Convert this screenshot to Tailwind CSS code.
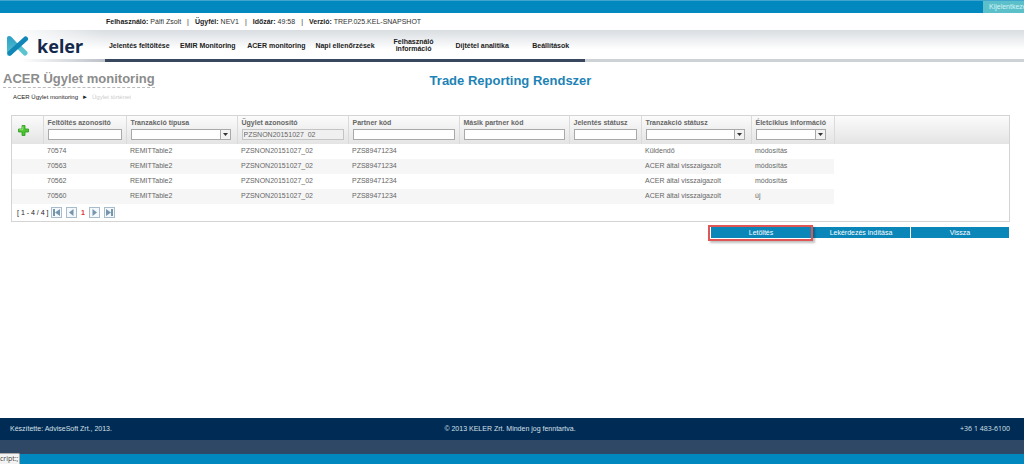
<!DOCTYPE html>
<html lang="hu">
<head>
<meta charset="utf-8">
<meta name="viewport" content="width=device-width, initial-scale=1">
<title>Trade Reporting Rendszer</title>
<script src="https://cdn.jsdelivr.net/npm/@tailwindcss/browser@4"></script>
</head>
<body class="flex min-h-screen flex-col overflow-x-hidden bg-white font-['Liberation_Sans',Arial,sans-serif] text-[7px] leading-[8px] text-[#666]">
<header>
  <div class="flex h-[13px] justify-end border-t border-[#40a6cf] bg-[#0088bf]">
    <a href="#" class="w-[41px] overflow-hidden bg-[#5cc0cb] pl-[6px] leading-[12px] whitespace-nowrap text-[#d5f4f5]">Kijelentkezés</a>
  </div>
  <div class="flex h-[17px] items-center gap-[6px] pl-[106px] text-[#333]">
    <span><b class="text-[#222]">Felhasználó:</b> Pálfi Zsolt</span><span>|</span>
    <span><b class="text-[#222]">Ügyfél:</b> NEV1</span><span>|</span>
    <span><b class="text-[#222]">Időzár:</b> 49:58</span><span>|</span>
    <span><b class="text-[#222]">Verzió:</b> TREP.025.KEL-SNAPSHOT</span>
  </div>
  <div class="flex h-[32px] bg-linear-to-b from-[#d9dde1] to-white to-60%">
    <a href="#" class="flex w-[105px] items-center gap-[8px] bg-linear-to-r from-white from-10% to-transparent pl-[7px]" aria-label="keler">
      <svg class="h-[20px] w-[22px]" viewBox="0 0 22 20" aria-hidden="true">
        <defs><linearGradient id="stem" x1="0" y1="0" x2="0" y2="1"><stop offset="0" stop-color="#2b9fc6"/><stop offset="1" stop-color="#5bc3cf"/></linearGradient></defs>
        <path d="M0 2Q0 0 2 0Q3.500 0 4.500 1L11 8L5 18.500Q4 20 2 20Q0 20 0 18Z" fill="url(#stem)"/>
        <path d="M11.500 10.500L18 17" stroke="#5cc3cf" stroke-width="5" stroke-linecap="round"/>
        <path d="M18.500 3L8 12.500L3 17" stroke="#1187b8" stroke-width="5" stroke-linecap="round" fill="none"/>
      </svg>
      <span class="font-['Noto_Sans',sans-serif] text-[18px] leading-[20px] font-bold text-[#14294d]">keler</span>
    </a>
    <nav class="grid w-[480px] grid-cols-7 items-center pb-[2px] text-center leading-[7px] font-bold text-[#222]">
      <a href="#">Jelentés feltöltése</a><a href="#">EMIR Monitoring</a><a href="#">ACER monitoring</a><a href="#">Napi ellenőrzések</a><a href="#">Felhasználó<br>információ</a><a href="#">Díjtétel analitika</a><a href="#">Beállítások</a>
    </nav>
  </div>
  <div class="-mt-[3px] flex h-[3px]">
    <div class="w-[105px] bg-linear-to-r from-white from-20% to-[#bcc1c8]"></div>
    <div class="w-[480px] bg-[#38475e]"></div>
    <div class="flex-1 bg-[#cdd2d7]"></div>
  </div>
</header>

<main class="flex-1">
  <div class="grid grid-cols-[1fr_auto_1fr] items-start pt-[9px] pr-[3px]">
    <h1 class="ml-[3px] w-fit border-b border-dashed border-[#bbb] text-[13px] leading-[16px] font-bold text-[#8c8c8c]">ACER Ügylet monitoring</h1>
    <h2 class="pt-[2px] text-[13px] leading-[16px] font-bold text-[#1d83b5]">Trade Reporting Rendszer</h2>
  </div>
  <nav class="mt-[4px] flex gap-[4px] pl-[13px] text-[6px]" aria-label="Morzsamenü">
    <a href="#" class="text-[#222]">ACER Ügylet monitoring</a><span class="text-[#222]">►</span><span class="text-[#ccc]">Ügylet történet</span>
  </nav>

  <section class="mr-[14px] ml-[11px] mt-[14px] border border-[#d4d4d4]">
    <table class="w-full table-fixed border-collapse text-left">
      <colgroup><col class="w-[31px]"><col class="w-[83px]"><col class="w-[111px]"><col class="w-[111px]"><col class="w-[111px]"><col class="w-[110px]"><col class="w-[72px]"><col class="w-[110px]"><col class="w-[83px]"><col></colgroup>
      <thead>
        <tr class="h-[28px] bg-linear-to-b from-[#fbfbfb] to-[#e4e4e4] align-top [&>th]:border-r [&>th]:border-[#dadada] [&>th]:px-[4px] [&>th]:pt-[3px] [&>th:last-child]:border-0">
          <th><button type="button" class="block pt-[6px] pl-[2px]" aria-label="Új"><svg class="h-[11px] w-[11px]" viewBox="0 0 11 11" aria-hidden="true"><path d="M4 .5H7V4H10.500V7H7V10.500H4V7H.5V4H4Z" fill="#4cc42f" stroke="#2c9a20" stroke-width=".8"/><path d="M4.800 1.500V4.800H1.500" stroke="#9be77c" fill="none"/></svg></button></th>
          <th><label for="f1" class="block">Feltöltés azonosító</label><input id="f1" class="mt-[2px] block h-[11px] w-full border border-[#a9a9a9] bg-white px-[2px] font-normal"></th>
          <th><label for="f2" class="block">Tranzakció típusa</label>
            <div class="relative mt-[2px] mr-[2px]"><select id="f2" class="block h-[11px] w-full appearance-none border border-[#a9a9a9] bg-white"><option></option></select><span class="pointer-events-none absolute inset-y-0 right-0 flex w-[11px] items-center justify-center border border-[#a9a9a9] bg-[#f2f2f2]"><svg class="h-[3px] w-[5px]" viewBox="0 0 5 3"><path d="M0 0H5L2.500 3Z" fill="#333"/></svg></span></div></th>
          <th><label for="f3" class="block">Ügylet azonosító</label><input id="f3" readonly value="PZSNON20151027_02" class="mt-[2px] block h-[11px] w-full border border-[#c4c4c4] bg-[#f0f0f0] px-[1px] leading-[9px] font-normal"></th>
          <th><label for="f4" class="block">Partner kód</label><input id="f4" class="mt-[2px] block h-[11px] w-full border border-[#a9a9a9] bg-white px-[2px] font-normal"></th>
          <th><label for="f5" class="block">Másik partner kód</label><input id="f5" class="mt-[2px] block h-[11px] w-full border border-[#a9a9a9] bg-white px-[2px] font-normal"></th>
          <th><label for="f6" class="block">Jelentés státusz</label><input id="f6" class="mt-[2px] block h-[11px] w-full border border-[#a9a9a9] bg-white px-[2px] font-normal"></th>
          <th><label for="f7" class="block">Tranzakció státusz</label>
            <div class="relative mt-[2px] mr-[2px]"><select id="f7" class="block h-[11px] w-full appearance-none border border-[#a9a9a9] bg-white"><option></option></select><span class="pointer-events-none absolute inset-y-0 right-0 flex w-[11px] items-center justify-center border border-[#a9a9a9] bg-[#f2f2f2]"><svg class="h-[3px] w-[5px]" viewBox="0 0 5 3"><path d="M0 0H5L2.500 3Z" fill="#333"/></svg></span></div></th>
          <th><label for="f8" class="block whitespace-nowrap">Életciklus információ</label>
            <div class="relative mt-[2px] mr-[4px]"><select id="f8" class="block h-[11px] w-full appearance-none border border-[#a9a9a9] bg-white"><option></option></select><span class="pointer-events-none absolute inset-y-0 right-0 flex w-[11px] items-center justify-center border border-[#a9a9a9] bg-[#f2f2f2]"><svg class="h-[3px] w-[5px]" viewBox="0 0 5 3"><path d="M0 0H5L2.500 3Z" fill="#333"/></svg></span></div></th>
          <th></th>
        </tr>
      </thead>
      <tbody class="[&>tr]:h-[15px] [&_td]:px-[4px] [&_td]:pb-[2px] [&>tr:nth-child(even)>td:not(:last-child)]:bg-[#f6f6f6]">
        <tr><td></td><td>70574</td><td>REMITTable2</td><td>PZSNON20151027_02</td><td>PZS89471234</td><td></td><td></td><td>Küldendő</td><td>módosítás</td><td></td></tr>
        <tr><td></td><td>70563</td><td>REMITTable2</td><td>PZSNON20151027_02</td><td>PZS89471234</td><td></td><td></td><td>ACER által visszaigazolt</td><td>módosítás</td><td></td></tr>
        <tr><td></td><td>70562</td><td>REMITTable2</td><td>PZSNON20151027_02</td><td>PZS89471234</td><td></td><td></td><td>ACER által visszaigazolt</td><td>módosítás</td><td></td></tr>
        <tr><td></td><td>70560</td><td>REMITTable2</td><td>PZSNON20151027_02</td><td>PZS89471234</td><td></td><td></td><td>ACER által visszaigazolt</td><td>új</td><td></td></tr>
      </tbody>
    </table>
    <div class="flex h-[17px] items-center gap-[4px] pl-[5px] text-[#222] [&>button]:flex [&>button]:size-[11px] [&>button]:items-center [&>button]:justify-center [&>button]:border [&>button]:border-[#a8bccb] [&>button]:bg-[#f4f8fb]">
      <span class="w-[30px] whitespace-nowrap">[ 1 - 4 / 4 ]</span>
      <button type="button" aria-label="Első"><svg class="size-[7px]" viewBox="0 0 7 7"><path d="M0 0H2V7H0ZM7 0V7L2 3.500Z" fill="#7795ad"/></svg></button>
      <button type="button" aria-label="Előző"><svg class="size-[7px]" viewBox="0 0 7 7"><path d="M5.500 0V7L1 3.500Z" fill="#7795ad"/></svg></button>
      <b class="text-[#d33]">1</b>
      <button type="button" aria-label="Következő"><svg class="size-[7px]" viewBox="0 0 7 7"><path d="M1.500 0V7L6 3.500Z" fill="#7795ad"/></svg></button>
      <button type="button" aria-label="Utolsó"><svg class="size-[7px]" viewBox="0 0 7 7"><path d="M5 0H7V7H5ZM0 0V7L5 3.500Z" fill="#7795ad"/></svg></button>
    </div>
  </section>

  <div class="mt-[5px] mr-[15px] flex justify-end gap-[1px] leading-[11px] text-white">
    <div class="relative"><button type="button" class="block h-[11px] w-[100px] bg-[#0a86b9]">Letöltés</button><span class="pointer-events-none absolute -top-[2px] -right-[2px] -bottom-[3px] -left-[3px] border-2 border-[#e05555] shadow-[2px_2px_2px_rgba(0,0,0,0.25)]"></span></div>
    <button type="button" class="h-[11px] w-[98px] bg-[#0a86b9]">Lekérdezés indítása</button>
    <button type="button" class="h-[11px] w-[98px] bg-[#0a86b9]">Vissza</button>
  </div>
</main>

<footer class="relative">
  <div class="grid h-[22px] grid-cols-3 items-center bg-[#002b54] pr-[14px] pl-[10px] text-[#d5e0ea]">
    <span>Készítette: AdviseSoft Zrt., 2013.</span><span class="text-center">© 2013 KELER Zrt. Minden jog fenntartva.</span><span class="text-right font-['Open_Sans',sans-serif]">+36 1 483-6100</span>
  </div>
  <div class="h-[14px] bg-[#2e4865]"></div>
  <div class="h-[10px] bg-[#0088bf]"></div>
  <div class="absolute bottom-0 left-0 h-[11px] w-[20px] overflow-hidden rounded-tr-xs border-t border-r border-[#aaa] bg-[#f3f3f3] font-['Open_Sans',sans-serif] leading-[10px] text-[#444]">cript:;</div>
</footer>
</body>
</html>
